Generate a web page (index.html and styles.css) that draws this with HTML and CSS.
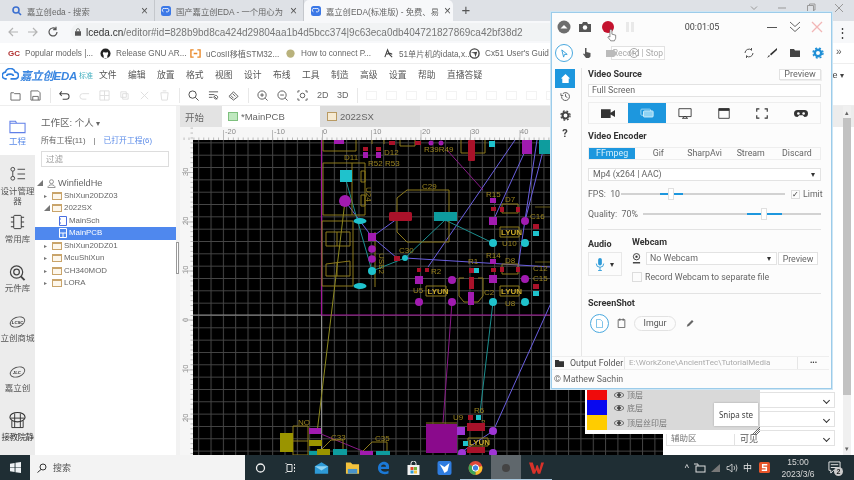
FILE: index.html
```html
<!DOCTYPE html>
<html lang="zh">
<head>
<meta charset="utf-8">
<title>嘉立创EDA</title>
<link rel="stylesheet" href="styles.css">
</head>
<body>
<div class="page">
  <div class="tabstrip">
    <div class="tab t1">
      <svg class="ti" viewBox="0 0 10 10"><circle cx="4" cy="4" r="3" fill="none" stroke="#3b6fd0" stroke-width="1.6"/><path d="M6 6l3 3" stroke="#3b6fd0" stroke-width="1.6"/></svg>
      <span class="tt">嘉立创eda - 搜索</span><span class="tx">×</span>
    </div>
    <div class="tab t2">
      <svg class="ti" viewBox="0 0 12 12"><rect width="12" height="12" rx="3" fill="#3b78e7"/><path d="M3 7a2 2 0 0 1 1-4h3a2 2 0 0 1 1 4H6" stroke="#fff" fill="none"/></svg>
      <span class="tt">国产嘉立创EDA - 一个用心为</span><span class="tx">×</span>
    </div>
    <div class="tab t3">
      <svg class="ti" viewBox="0 0 12 12"><rect width="12" height="12" rx="3" fill="#3b78e7"/><path d="M3 7a2 2 0 0 1 1-4h3a2 2 0 0 1 1 4H6" stroke="#fff" fill="none"/></svg>
      <span class="tt">嘉立创EDA(标准版) - 免费、易</span><span class="tx">×</span>
    </div>
    <span class="plus">+</span>
    <div class="winctl">
      <svg viewBox="0 0 10 10"><path d="M2 3.500l3 3 3-3" fill="none" stroke="#999"/></svg>
      <svg viewBox="0 0 10 10"><path d="M1 5h8" stroke="#999"/></svg>
      <svg viewBox="0 0 10 10"><path d="M1.500 2.500h6v6h-6zM3.500 2.500V1h5.500v6H7.500" fill="none" stroke="#999"/></svg>
      <svg viewBox="0 0 10 10"><path d="M1 1l8 8M9 1l-8 8" stroke="#999"/></svg>
    </div>
  </div>

  <div class="addr">
    <svg class="nav-ic" viewBox="0 0 12 12"><path d="M11 6H2M6 2L2 6l4 4" fill="none" stroke="#b4b4b4" stroke-width="1.2"/></svg>
    <svg class="nav-ic" viewBox="0 0 12 12"><path d="M1 6h9M6 2l4 4-4 4" fill="none" stroke="#b4b4b4" stroke-width="1.2"/></svg>
    <svg class="nav-ic" viewBox="0 0 12 12"><path d="M10 6a4 4 0 1 1-1.2-2.9M9 .8v2.8H6.2" fill="none" stroke="#555" stroke-width="1.2"/></svg>
    <div class="url">
      <svg class="lock" viewBox="0 0 8 10"><rect y="4" width="8" height="6" fill="#555"/><path d="M2 4V2.500a2 2 0 0 1 4 0V4" fill="none" stroke="#555"/></svg>
      <span class="host">lceda.cn</span><span class="path">/editor#id=828b9bd8ca424d29804aa1b4d5bcc374|9c63eca0db404721827869ca42bf38d2</span>
    </div>
    <span class="kebab">⋮</span>
  </div>

  <div class="bookmarks">
    <span class="bm b1"><b class="gc">GC</b>Popular models |...</span>
    <span class="bm b2"><svg class="bi" viewBox="0 0 12 12"><circle cx="6" cy="6" r="5.500" fill="#222"/><path d="M4 11V8.500L3 6l1-2 1.200.8h2L8 4l1 2-1 2.500V11" fill="#fff"/></svg>Release GNU AR...</span>
    <span class="bm b3"><svg class="bi" viewBox="0 0 12 12"><path d="M4 2H1v8h3M8 2h3v8H8M4 6h4" fill="none" stroke="#e9892a" stroke-width="1.500"/></svg>uCosII移植STM32...</span>
    <span class="bm b4"><svg class="bi" viewBox="0 0 12 12"><circle cx="6" cy="6" r="4.500" fill="#b9b27c"/></svg>How to connect P...</span>
    <span class="bm b5"><svg class="bi" viewBox="0 0 12 12"><path d="M2 10l3-8 2 5 3 3M4 7c3-2 5-1 6 0" fill="none" stroke="#444" stroke-width="1.200"/></svg>51单片机的idata,x...</span>
    <span class="bm b6"><svg class="bi" viewBox="0 0 12 12"><circle cx="6" cy="6" r="5" fill="none" stroke="#444" stroke-width="1.500"/><path d="M2 5l4 1 1 4 2-6z" fill="#444"/></svg>Cx51 User's Guid</span>
    <span class="more">»</span>
  </div>

  <div class="menubar">
    <svg class="logo" viewBox="0 0 18 14"><path d="M5 11H4a3.500 3.500 0 0 1-.5-7 5.500 5.500 0 0 1 10.500 0 3.500 3.500 0 0 1 0 7H9M5 8c0-2 2-2 4-2s3 1 3 2" fill="none" stroke="#2f7fe0" stroke-width="1.800"/></svg>
    <span class="brand">嘉立创EDA</span><span class="std">标准</span>
    <span class="menus"><span>文件</span><span>编辑</span><span>放置</span><span>格式</span><span>视图</span><span>设计</span><span>布线</span><span>工具</span><span>制造</span><span>高级</span><span>设置</span><span>帮助</span><span>直播答疑</span></span>
  </div>

  <div class="toolbar">
    <svg class="tb" viewBox="0 0 12 12"><path d="M1 3h3l1 1h6v7H1z" fill="none" stroke="#666"/></svg>
    <svg class="tb" viewBox="0 0 12 12"><path d="M1 1h8l2 2v8H1zM3 11V7h6v4" fill="none" stroke="#666"/></svg>
    <i class="tsep"></i>
    <svg class="tb" viewBox="0 0 12 12"><path d="M1 4h7a3 3 0 0 1 0 6H4M3 1.500L.8 4 3 6.500" fill="none" stroke="#444" stroke-width="1.100"/></svg>
    <svg class="tb" viewBox="0 0 12 12"><path d="M11 4H4a3 3 0 0 0 0 6h4" fill="none" stroke="#ddd"/></svg>
    <svg class="tb" viewBox="0 0 12 12"><path d="M1 1h10v10H1zM1 6h10M6 1v10" fill="none" stroke="#ddd"/></svg>
    <svg class="tb" viewBox="0 0 12 12"><path d="M2 2h6v6H2zM4 4h6v6H4z" fill="none" stroke="#ddd"/></svg>
    <svg class="tb" viewBox="0 0 12 12"><path d="M2 2l8 8M10 2l-8 8" fill="none" stroke="#ddd"/></svg>
    <svg class="tb" viewBox="0 0 12 12"><path d="M2 3h8l-1 8H3zM4 1h4" fill="none" stroke="#ddd"/></svg>
    <i class="tsep"></i>
    <svg class="tb" viewBox="0 0 12 12"><circle cx="5" cy="5" r="4" fill="none" stroke="#444"/><path d="M8 8l3.500 3.500" stroke="#444"/></svg>
    <svg class="tb" viewBox="0 0 12 12"><path d="M1 2h10M1 5h6M1 8h4M7 7l3 3M10 6.500a2 2 0 1 1-.1-.1" fill="none" stroke="#555"/></svg>
    <svg class="tb" viewBox="0 0 12 12"><path d="M1 7l5-5 5 5-5 4zM3 6l3 3M5 4l3 3" fill="none" stroke="#555"/></svg>
    <i class="tsep"></i>
    <svg class="tb" viewBox="0 0 12 12"><circle cx="5.500" cy="5.500" r="4.500" fill="none" stroke="#555"/><path d="M3.500 5.500h4M5.500 3.500v4M9 9l2.500 2.500" stroke="#555"/></svg>
    <svg class="tb" viewBox="0 0 12 12"><circle cx="5.500" cy="5.500" r="4.500" fill="none" stroke="#555"/><path d="M3.500 5.500h4M9 9l2.500 2.500" stroke="#555"/></svg>
    <svg class="tb" viewBox="0 0 12 12"><path d="M1 3V1h2M9 1h2v2M11 9v2H9M3 11H1V9" fill="none" stroke="#555"/><circle cx="6" cy="6" r="2.500" fill="none" stroke="#555"/></svg>
    <span class="tb tb-t">2D</span><span class="tb tb-t">3D</span>
    <i class="tsep"></i>
    <span class="faded-row"><i></i><i></i><i></i><i></i><i></i><i></i><i></i><i></i><i></i><i></i></span>
  </div>

  <div class="work">
    <aside class="rail">
      <div class="rail-item active h49 rail-project">
        <svg class="ri" viewBox="0 0 18 16"><path d="M1 3h6l1 2h9v10H1zM1 5h7" fill="none" stroke="#5f7fe8" stroke-width="1.100"/></svg>
        <span class="blue">工程</span>
      </div>
      <div class="rail-item h51 rail-design">
        <svg class="ri" viewBox="0 0 18 16"><circle cx="4" cy="3" r="2" fill="none" stroke="#444"/><circle cx="4" cy="12.500" r="2" fill="none" stroke="#444"/><path d="M4 5v5.500M9 3h8M9 8h8M9 13h8" stroke="#444"/></svg>
        <span>设计管理器</span>
      </div>
      <div class="rail-item h49 rail-common">
        <svg class="ri" viewBox="0 0 18 16"><rect x="5" y="1" width="8" height="14" rx="1" fill="none" stroke="#333"/><path d="M2 3h3M2 8h3M2 13h3M13 3h3M13 8h3M13 13h3" stroke="#333"/></svg>
        <span>常用库</span>
      </div>
      <div class="rail-item h50 rail-parts">
        <svg class="ri big" viewBox="0 0 18 18"><circle cx="8" cy="8" r="6.500" fill="none" stroke="#444" stroke-width="1.300"/><circle cx="8" cy="8" r="3" fill="none" stroke="#444" stroke-width="1.300"/><path d="M12.500 12.500l4 4" stroke="#444" stroke-width="2"/></svg>
        <span>元件库</span>
      </div>
      <div class="rail-item h50 rail-shop">
        <svg class="ri" viewBox="0 0 18 16"><ellipse cx="9" cy="8" rx="8" ry="5" fill="none" stroke="#555" transform="rotate(-20 9 8)"/><text x="3" y="10.500" class="rail-tx">LCSC</text></svg>
        <span>立创商城</span>
      </div>
      <div class="rail-item h50 rail-shop">
        <svg class="ri" viewBox="0 0 18 16"><ellipse cx="9" cy="8" rx="8" ry="5" fill="none" stroke="#555" transform="rotate(-20 9 8)"/><text x="4" y="10.500" class="rail-tx">JLC</text></svg>
        <span>嘉立创</span>
      </div>
      <div class="rail-item grow rail-learn">
        <svg class="ri big" viewBox="0 0 18 18"><ellipse cx="9" cy="6" rx="8" ry="5" fill="none" stroke="#333" stroke-width="1.200"/><path d="M3 10v7h12v-7M6 2v15M12 2v15M2 7h14" fill="none" stroke="#333"/></svg>
        <span class="tight">接教院静</span>
      </div>
    </aside>

    <section class="tree">
      <div class="ws">工作区: 个人 <span class="car">▾</span></div>
      <div class="scope"><span>所有工程(11)</span><span class="bar">|</span><span class="blue">已打开工程(6)</span></div>
      <div class="filter">过滤</div>
      <ul class="rows">
        <li class="root"><i class="tg">◢</i><svg class="uic" viewBox="0 0 10 10"><circle cx="5" cy="3" r="2.200" fill="none" stroke="#888"/><path d="M1 9.500c0-4 8-4 8 0z" fill="none" stroke="#888"/></svg>WinfieldHe</li>
        <li class="f"><i class="tg">▸</i><i class="fld"></i>ShiXun20DZ03</li>
        <li class="f"><i class="tg">◢</i><i class="fld"></i>2022SX</li>
        <li class="d"><svg class="doc" viewBox="0 0 8 10"><path d="M.5.500h7v9h-7zM0 3h2M0 7h2" fill="none" stroke="#4a6fe0"/></svg>MainSch</li>
        <li class="d sel"><svg class="doc" viewBox="0 0 8 10"><path d="M.5.500h7v9h-7zM.5 5h7M4 5v4" fill="none" stroke="#fff"/></svg>MainPCB</li>
        <li class="f"><i class="tg">▸</i><i class="fld"></i>ShiXun20DZ01</li>
        <li class="f"><i class="tg">▸</i><i class="fld"></i>McuShiXun</li>
        <li class="f"><i class="tg">▸</i><i class="fld"></i>CH340MOD</li>
        <li class="f"><i class="tg">▸</i><i class="fld"></i>LORA</li>
      </ul>
    </section>

    <div class="split"><i></i></div>

    <section class="editor">
      <div class="doc-tabs">
        <span class="dt dt-start">开始</span>
        <span class="dt dt-on"><i class="dico green"></i>*MainPCB</span>
        <span class="dt dt-off"><i class="dico tan"></i>2022SX</span>
      </div>
      <svg class="board" viewBox="180 127 483 328" xmlns="http://www.w3.org/2000/svg">
        <defs>
          <pattern id="grid" x="321.500" y="315" width="12.330" height="12.330" patternUnits="userSpaceOnUse">
            <path d="M.5 0V12.330M0 .5H12.330" stroke="#464646" stroke-width="1" fill="none"/>
          </pattern>
          <pattern id="tickx" x="223" y="127" width="4.930" height="13" patternUnits="userSpaceOnUse">
            <path d="M.5 10.500V13" stroke="#bbb"/>
          </pattern>
          <pattern id="ticky" x="180" y="172" width="13" height="4.930" patternUnits="userSpaceOnUse">
            <path d="M10.500 .5H13" stroke="#bbb"/>
          </pattern>
        </defs>
        <rect x="180" y="127" width="483" height="328" fill="#f6f6f6"/>
        <rect x="180" y="127" width="483" height="13" fill="url(#tickx)"/>
        <rect x="180" y="127" width="13" height="328" fill="url(#ticky)"/>
        <g class="rul">
          <path d="M223.500 130V140M272.500 130V140M322.500 130V140M371.500 130V140M421 130V140M470.500 130V140M520 130V140" stroke="#bbb"/>
          <text x="225" y="134">-20</text><text x="274" y="134">-10</text><text x="323" y="134">0</text><text x="373" y="134">10</text><text x="422" y="134">20</text><text x="471" y="134">30</text><text x="520" y="134">40</text>
          <text transform="translate(188 176) rotate(-90)">30</text><text transform="translate(188 225) rotate(-90)">20</text><text transform="translate(188 274) rotate(-90)">10</text><text transform="translate(188 322) rotate(-90)">0</text><text transform="translate(188 373) rotate(-90)">10</text><text transform="translate(188 422) rotate(-90)">20</text>
          <path d="M182 172.500H193M182 222H193M182 271H193M182 320H193M182 370H193M182 419H193" stroke="#bbb"/>
        </g>
        <rect x="193" y="140" width="470" height="315" fill="#000"/>
        <rect x="193" y="140" width="470" height="315" fill="url(#grid)"/>
        <path d="M193 315H321M321.500 315V455" stroke="#8e8e8e"/>
        <path d="M321.500 140V315H663" stroke="#a3189b" stroke-width="1.200" fill="none"/>

        <g class="rat">
          <path d="M515 140L428 267M537 140L518 267M405 258L551 267M372 237L401 216M372 237L397 258M345 201L372 237M527 147L493 221M544 147L525 221M551 303L495 427M460 453L493 431"/>
        </g>
        <g class="ratg">
          <path d="M345 177L372 271M405 258L445 220M445 220L493 243M372 271L405 258M493 302L480 413"/>
        </g>
        <path d="M345 201L317 433" stroke="#8e8a20" fill="none"/>
        <path d="M452 302L443 423M321 434L365 452M447 150L483 190" stroke="#8a1a8a" fill="none"/>

        <g class="silk">
          <path d="M323 140V151H356V140M323 163H365V215H323ZM352 163V215M361 171h4v11h-4zM361 195h4v11h-4z"/>
          <path d="M322 221H353V286H322ZM326 232H350V246H326ZM337 232V246M326 264L350 261V276H326ZM337 262V276M375 232V287"/>
          <path d="M397 198L407 190H449V242H407L397 232ZM461 140V153H485V140M372 140V144M384 140V144M400 140V146H415V140"/>
          <path d="M500 227H519V237H500ZM500 286H519V296H500ZM426 286H446V296H426ZM502 204H518V213H502ZM502 264H518V274H502ZM459 278H464M478 278H483V296L478 302H464L459 296V278"/>
          <path d="M293 426H308V455H293ZM293 441H308M322 449L331 440H343V449M363 451L372 442H387V451M426 423H457M468 438H488V446H468Z"/>
          <path d="M535 207H551V262H535" stroke-opacity=".7"/>
        </g>
        <g class="lbl">
          <text x="344" y="160">D11</text><text x="368" y="166">R52 R53</text><text x="384" y="155">D12</text><text x="424" y="152">R39R49</text>
          <text x="422" y="189">C29</text><text x="399" y="253">C30</text><text x="431" y="274">R2</text><text x="473" y="264" text-anchor="middle">R1</text>
          <text x="486" y="197">R15</text><text x="505" y="202">D7</text><text x="530" y="219">C16</text><text x="502" y="246">U10</text>
          <text x="486" y="258">R14</text><text x="505" y="263">D8</text><text x="533" y="271">C12</text><text x="533" y="281">C15</text><text x="484" y="295">C2</text><text x="413" y="293">U5</text><text x="505" y="306">U8</text>
          <text x="298" y="425">NO</text><text x="331" y="440">C33</text><text x="375" y="441">C35</text><text x="453" y="420">U9</text><text x="474" y="413">R6</text><text x="481" y="425">2</text>
          <text transform="translate(366 187) rotate(90)">U24</text><text transform="translate(379 253) rotate(90)">USB2</text>
          <text x="427.500" y="294" class="lyun">LYUN</text><text x="501" y="235" class="lyun">LYUN</text><text x="501" y="294" class="lyun">LYUN</text><text x="469" y="445" class="lyun">LYUN</text>
        </g>

        <g class="teal">
          <rect x="340" y="170" width="12" height="12"/><ellipse cx="360" cy="221" rx="6.500" ry="3"/><ellipse cx="360" cy="286" rx="6.500" ry="3"/>
          <circle cx="372" cy="271" r="4"/><circle cx="405" cy="258" r="3"/><circle cx="493" cy="243" r="4"/><circle cx="525" cy="243" r="4"/><circle cx="493" cy="302" r="4"/><circle cx="525" cy="302" r="4"/>
          <rect x="474" y="268" width="5" height="5"/><rect x="489" y="141" width="6" height="6"/><rect x="533" y="231" width="6" height="5"/><rect x="533" y="291" width="6" height="5"/><rect x="539" y="140" width="11" height="14" class="dk"/><rect x="434" y="212" width="23" height="9" class="dk"/>
          <rect x="309" y="451" width="13" height="4" class="dk"/><rect x="333" y="449" width="14" height="6" class="dk"/><rect x="376" y="451" width="14" height="4" class="dk"/><rect x="463" y="441" width="5" height="5"/><rect x="476" y="415" width="5" height="5"/>
        </g>
        <g class="red">
          <rect x="389" y="212" width="23" height="9" rx="1.500"/><rect x="468" y="140" width="7" height="21" rx="1"/><rect x="469" y="277" width="5" height="12"/>
          <rect x="394" y="256" width="6" height="5"/><rect x="417" y="268" width="4" height="4"/><rect x="425" y="268" width="4" height="4"/><rect x="469" y="268" width="5" height="5"/>
          <rect x="491" y="207" width="5" height="4"/><rect x="491" y="268" width="5" height="4"/><rect x="500" y="207" width="4" height="5"/><rect x="516" y="207" width="4" height="5"/><rect x="500" y="267" width="4" height="5"/><rect x="516" y="267" width="4" height="5"/>
          <rect x="533" y="224" width="6" height="5"/><rect x="533" y="284" width="6" height="5"/><rect x="363" y="147" width="5" height="4"/><rect x="376" y="147" width="5" height="4"/><rect x="389" y="141" width="6" height="4"/><rect x="415" y="141" width="6" height="4"/><rect x="468" y="415" width="5" height="5"/><rect x="467" y="423" width="18" height="8"/><rect x="467" y="447" width="18" height="6"/>
        </g>
        <g class="mag">
          <rect x="334" y="140" width="10" height="4"/><circle cx="345" cy="201" r="6"/><rect x="368" y="233" width="8" height="8"/><circle cx="372" cy="249" r="3.800"/><circle cx="372" cy="259" r="3.800"/>
          <rect x="363" y="152" width="5" height="6"/><rect x="376" y="152" width="5" height="6"/><circle cx="431" cy="143" r="2.500"/><circle cx="441" cy="143" r="2.500"/>
          <rect x="415" y="276" width="8" height="8"/><circle cx="452" cy="280" r="4"/><circle cx="419" cy="302" r="4"/><circle cx="452" cy="302" r="4"/><rect x="468" y="292" width="6" height="13"/>
          <rect x="490" y="198" width="6" height="5"/><rect x="489" y="217" width="8" height="8"/><circle cx="525" cy="221" r="4"/><rect x="490" y="259" width="6" height="5"/><rect x="489" y="275" width="8" height="8"/><circle cx="525" cy="279" r="4"/>
          <rect x="522" y="140" width="10" height="14"/>
          <rect x="309" y="428" width="12" height="6"/><rect x="360" y="451" width="13" height="4"/><rect x="426" y="424" width="31" height="29" class="big"/><rect x="457" y="427" width="8" height="8" class="lt"/><circle cx="493" cy="431" r="4" class="lt"/><circle cx="493" cy="453" r="4" class="lt"/><circle cx="462" cy="453" r="4" class="lt"/>
        </g>
        <g class="oli">
          <rect x="280" y="433" width="13" height="19"/><rect x="309" y="440" width="13" height="6"/><rect x="317" y="449" width="13" height="6"/>
        </g>
      </svg>
    </section>

    <aside class="props">
      <div class="props-top"><span class="prof">He <span class="car">▾</span></span></div>
      <div class="props-body">
        <div class="pgrid">
          <div class="prow"><span class="chev"></span></div>
          <div class="prow"><span class="chev"></span></div>
          <div class="prow"><span class="k">辅助区</span><span class="v">可见</span><span class="chev"></span></div>
        </div>
      </div>
      <div class="scroll"><b></b><i class="up">▴</i><i class="down">▾</i></div>
    </aside>
  </div>

  <div class="taskbar">
    <svg class="start" viewBox="0 0 12 12"><path d="M0 1.800L5 1v4.600H0zM6 .9l6-.9v5.600H6zM0 6.400h5V11l-5-.8zM6 6.400h6V12l-6-.9z" fill="#eef2f4"/></svg>
    <div class="search">
      <svg class="sic" viewBox="0 0 10 10"><circle cx="6" cy="4" r="3" fill="none" stroke="#333"/><path d="M4 6.500L.5 9.500" stroke="#333"/></svg>
      <span>搜索</span>
    </div>
    <div class="apps">
      <span class="app"><svg viewBox="0 0 14 14"><circle cx="7" cy="7" r="4" fill="none" stroke="#f0f0f0" stroke-width="1.300"/></svg></span>
      <span class="app"><svg viewBox="0 0 14 14"><path d="M2.500 3.500h5v7h-5zM10 3v1.500M10 6v2M10 9.500V11M1.500 2v1M1.500 11v1" fill="none" stroke="#e8e8e8"/></svg></span>
      <span class="app"><svg viewBox="0 0 18 14"><path d="M1 5l8-5 8 5v9H1z" fill="#2e9ad6"/><path d="M1 5l8 5 8-5" fill="#8fd3f2"/></svg></span>
      <span class="app"><svg viewBox="0 0 16 14"><path d="M1 1h5l2 2h7v10H1z" fill="#f3c23d"/><path d="M3 8h10v5H3z" fill="#4a93c8"/></svg></span>
      <span class="app"><svg viewBox="0 0 14 14"><path d="M12.500 8H4.500c.3 2.800 4.500 3.400 7.500 1.800v2.600C8 14.200 1.500 13 1.500 7 1.500 1.500 8-1.300 11.500 2.500c1.300 1.500 1.100 3.500 1 5.500zM4.500 5.800h5c0-3-4.700-3-5 0z" fill="#1b79d6"/></svg></span>
      <span class="app"><svg viewBox="0 0 14 14"><path d="M1 4h12v10H1z" fill="#f2f2f2"/><path d="M4.500 4V2.500a2.500 2.500 0 0 1 5 0V4" fill="none" stroke="#f2f2f2"/><rect x="4" y="6" width="3" height="3" fill="#e24b2b"/><rect x="7.500" y="6" width="3" height="3" fill="#72b33c"/><rect x="4" y="9.500" width="3" height="3" fill="#2e9ad6"/><rect x="7.500" y="9.500" width="3" height="3" fill="#f3c23d"/></svg></span>
      <span class="app"><svg viewBox="0 0 14 14"><rect width="14" height="14" rx="2" fill="#2f7de0"/><path d="M2 3l5 3 5-4-2 8-3 2-2-4z" fill="#fff"/></svg></span>
      <span class="app on"><svg viewBox="0 0 14 14"><circle cx="7" cy="7" r="7" fill="#e0483a"/><path d="M7 7L13.500 5A7 7 0 0 1 7 14z" fill="#f5c42c"/><path d="M7 7L7 14A7 7 0 0 1 1 3.500z" fill="#3da655"/><circle cx="7" cy="7" r="3.200" fill="#3f7fe0" stroke="#fff"/></svg></span>
      <span class="app tile on"><i></i></span>
      <span class="app on"><svg viewBox="0 0 16 14"><path d="M0 1h4l2.500 8L8 4h1.500l1.500 5L13 1h3l-4 12H9.500L8 9l-1.500 4H4z" fill="#d8322a"/></svg></span>
    </div>
    <div class="tray">
      <span class="ty">^</span>
      <svg class="tyi" viewBox="0 0 12 10"><rect x="2" y="3" width="9" height="6" fill="none" stroke="#ddd"/><path d="M0 1h4v2" fill="none" stroke="#ddd"/></svg>
      <svg class="tyi" viewBox="0 0 12 10"><path d="M1 9l9-8v8z" fill="#777"/></svg>
      <svg class="tyi" viewBox="0 0 12 10"><path d="M1 3.500h2l3-2.500v8L3 6.500H1zM8 3l.8 2L8 7M10 1.500l1 3.500-1 3.500" fill="none" stroke="#ddd" stroke-width=".8"/></svg>
      <span class="zh">中</span>
      <svg class="sogou" viewBox="0 0 12 12"><rect width="12" height="12" rx="2" fill="#e8552a"/><path d="M9 3H4v3h4v3H3" fill="none" stroke="#fff" stroke-width="1.600"/></svg>
      <div class="clock"><span>15:00</span><span>2023/3/6</span></div>
      <div class="note"><svg viewBox="0 0 14 14"><path d="M1 1h12v9H6l-3 3v-3H1z" fill="none" stroke="#eee"/><path d="M3 4h8M3 7h8" stroke="#eee"/></svg><b>2</b></div>
    </div>
  </div>

  <div class="layers">
    <div class="lrow"><i class="sw r"></i><span class="eye"></span><span>顶层</span></div>
    <div class="lrow"><i class="sw b"></i><span class="eye"></span><span>底层</span></div>
    <div class="lrow"><i class="sw y"></i><span class="eye"></span><span>顶层丝印层</span></div>
  </div>
  <div class="snip">Snipa ste</div>
  <svg class="resize" viewBox="0 0 10 10"><path d="M1 9l8-8M3 9l6-6M5 9l4-4" stroke="#666"/></svg>

  <div class="rec">
    <div class="rec-top">
      <span class="ric-c"><svg class="r14" viewBox="0 0 14 14"><circle cx="7" cy="7" r="6.500" fill="#6e6e6e"/><path d="M3.500 8.500L7 5l3.500 3.500z" fill="#fff"/></svg></span>
      <svg class="r14 cam" viewBox="0 0 14 14"><path d="M1 4h3l1-2h4l1 2h3v8H1z" fill="#555"/><circle cx="7" cy="7.500" r="2.200" fill="#fff"/></svg>
      <svg class="r14 recb" viewBox="0 0 14 14"><circle cx="7" cy="7" r="6" fill="#c4122e"/></svg>
      <svg class="r14 pause" viewBox="0 0 14 14"><path d="M3 2h3v10H3zM8 2h3v10H8z" fill="#e9e9e9"/></svg>
      <span class="time">00:01:05</span>
      <span class="minbtn"></span>
      <svg class="r14 dbl" viewBox="0 0 14 14"><path d="M2 2l5 4.500L12 2M2 7l5 4.500L12 7" fill="none" stroke="#666"/></svg>
      <svg class="r14 cls" viewBox="0 0 14 14"><path d="M2 2l10 10M12 2L2 12" stroke="#f2b6b6" stroke-width="1.300"/></svg>
    </div>
    <div class="rec-tools">
      <span class="ring"><svg viewBox="0 0 10 10"><path d="M2 1l6 5H5l-1 3z" fill="none" stroke="#2d9ad8"/></svg></span>
      <svg class="r12 hand" viewBox="0 0 12 12"><path d="M4 1h1.500v4l4 1v3.500L8 11H5L2 7l1-.5 1 1z" fill="#555"/></svg>
      <span class="hint">Record | Stop</span>
      <span class="rt-right">
        <svg class="r12" viewBox="0 0 12 12"><path d="M10 6a4 4 0 0 1-6.500 3M2 6a4 4 0 0 1 6.500-3M8.500 1v2.500M3.500 11V8.500" fill="none" stroke="#555"/></svg>
        <svg class="r12" viewBox="0 0 12 12"><path d="M1 11l2-3 1 1zM4 7l7-6v2L5 8.500z" fill="#333"/></svg>
        <svg class="r12" viewBox="0 0 12 12"><path d="M1 2h4l1 1.500h5V10H1z" fill="#444"/></svg>
        <svg class="r12" viewBox="0 0 12 12"><circle cx="6" cy="6" r="3.200" fill="none" stroke="#1f8fd6" stroke-width="2.400"/><circle cx="6" cy="6" r="5" fill="none" stroke="#1f8fd6" stroke-width="1.400" stroke-dasharray="2 2"/></svg>
      </span>
      <svg class="ghost g1" viewBox="0 0 12 12"><path d="M1 3h8l2 2v3l-2 2H1z" fill="#bbb"/></svg>
      <svg class="ghost g2" viewBox="0 0 12 12"><circle cx="6" cy="6" r="4.500" fill="none" stroke="#aaa"/><path d="M5 3v3.500h3" fill="none" stroke="#aaa"/></svg>
    </div>
    <svg class="pointer" viewBox="0 0 12 16"><path d="M3.500 9V2.500a1.200 1.200 0 0 1 2.400 0V7l4.500 1.200V12l-1.500 3H4.500L1 10.500c1-1.200 1.800-.8 2.500 0z" fill="#fff" stroke="#555" stroke-width=".8"/></svg>
    <div class="rec-body">
      <nav class="rnav">
        <span class="rn on"><svg viewBox="0 0 12 12"><path d="M1 6l5-5 5 5h-1.500v5h-7V6z" fill="#fff"/></svg></span>
        <span class="rn"><svg viewBox="0 0 12 12"><path d="M3 3a4.300 4.300 0 1 1-1.300 3M1 2.500V5h2.500M6 3.500V6l2 1" fill="none" stroke="#555"/></svg></span>
        <span class="rn"><svg viewBox="0 0 12 12"><circle cx="6" cy="6" r="3.200" fill="none" stroke="#444" stroke-width="2.200"/><circle cx="6" cy="6" r="5" fill="none" stroke="#444" stroke-width="1.400" stroke-dasharray="2 2"/></svg></span>
        <span class="rn q">?</span>
      </nav>
      <div class="rmain">
        <div class="rhead"><b>Video Source</b><span class="btn pv">Preview</span></div>
        <div class="field">Full Screen</div>
        <div class="src">
          <span><svg viewBox="0 0 16 12"><path d="M0 1h11v10H0zM11 5l5-3v8l-5-3z" fill="#333"/></svg></span>
          <span class="on"><svg viewBox="0 0 16 12"><rect x="1" y="1" width="11" height="7" rx="1" fill="none" stroke="#a9def7"/><rect x="4" y="3" width="11" height="7" rx="1" fill="#8ed2f3" stroke="#d7f1fc"/></svg></span>
          <span><svg viewBox="0 0 16 12"><path d="M1 .5h14v9H1zM5 11.500h6L8 9z" fill="none" stroke="#333"/></svg></span>
          <span><svg viewBox="0 0 16 12"><path d="M2 .5h12v11H2z" fill="none" stroke="#333"/><path d="M2 0h12v3H2z" fill="#333"/></svg></span>
          <span><svg viewBox="0 0 16 12"><path d="M5 .7H2V4M11 .7h3V4M14 8v3.300h-3M5 11.300H2V8" fill="none" stroke="#333" stroke-width="1.300"/></svg></span>
          <span><svg viewBox="0 0 16 12"><path d="M4 2h8a3.500 3.500 0 0 1 0 8l-2-2H6l-2 2a3.500 3.500 0 0 1 0-8z" fill="#333"/><circle cx="5" cy="6" r="1.500" fill="#fff"/><circle cx="11" cy="6" r="1.500" fill="#fff"/></svg></span>
        </div>
        <div class="rhead enc-h"><b>Video Encoder</b></div>
        <div class="enc"><span class="on">FFmpeg</span><span>Gif</span><span>SharpAvi</span><span>Stream</span><span>Discard</span></div>
        <div class="field combo">Mp4 (x264 | AAC)<i>▾</i></div>
        <div class="sl fps">
          <span class="sl-l">FPS:&nbsp; 10</span>
          <div class="track"><i class="fill"></i><i class="thumb"></i></div>
          <span class="lim"><i class="ck">✓</i>Limit</span>
        </div>
        <div class="sl qual">
          <span class="sl-l">Quality:&nbsp; 70%</span>
          <div class="track"><i class="fill"></i><i class="thumb"></i></div>
        </div>
        <hr class="rule first">
        <div class="av">
          <div class="aud">
            <b>Audio</b>
            <div class="audbox"><svg viewBox="0 0 10 14"><rect x="3" y="0" width="4" height="8" rx="2" fill="#2d9ad8"/><path d="M1 6a4 4 0 0 0 8 0M5 10v3M3 13.500h4" fill="none" stroke="#2d9ad8"/></svg><i>▾</i></div>
          </div>
          <div class="web">
            <b>Webcam</b>
            <div class="wrow"><svg viewBox="0 0 10 12"><circle cx="5" cy="4" r="3.500" fill="none" stroke="#333"/><circle cx="5" cy="4" r="1.300" fill="#333"/><path d="M1 10h8v1.500H1z" fill="#333"/></svg><span class="field wc">No Webcam<i>▾</i></span><span class="btn wp">Preview</span></div>
            <div class="wchk"><i class="cb"></i>Record Webcam to separate file</div>
          </div>
        </div>
        <hr class="rule second">
        <b class="ss">ScreenShot</b>
        <div class="shots">
          <span class="ring big"><svg viewBox="0 0 10 12"><path d="M1 .5h5l3 3v8H1z" fill="none" stroke="#55b0e2"/></svg></span>
          <svg class="clip" viewBox="0 0 10 12"><path d="M1 2h8v9.500H1zM3 .5v3M7 .5v3" fill="none" stroke="#555"/></svg>
          <span class="pill">Imgur</span>
          <svg class="clip" viewBox="0 0 12 12"><path d="M1 11l1-3 6-6 2 2-6 6z" fill="#666"/></svg>
        </div>
      </div>
    </div>
    <div class="rout">
      <svg viewBox="0 0 12 10"><path d="M1 1h4l1 1.500h5V9H1z" fill="#333"/></svg>
      <span class="ol">Output Folder</span>
      <span class="op">E:\WorkZone\AncientTec\TutorialMedia</span>
      <span class="dots">•••</span>
    </div>
    <div class="rcopy">© Mathew Sachin</div>
  </div>
</div>
</body>
</html>
```
FILE: styles.css
```css
* { box-sizing: border-box; }
html, body { margin: 0; padding: 0; }
body { width: 854px; height: 480px; overflow: hidden; background: #fff; font-family: "Liberation Sans", "Noto Sans CJK SC", sans-serif; color: #555; }
i { font-style: normal; }
ul { list-style: none; margin: 0; padding: 0; }
svg { display: block; flex: none; }
.page { position: relative; width: 854px; height: 480px; display: flex; flex-direction: column; overflow: hidden; filter: blur(.35px); }

/* browser tabs */
.tabstrip { height: 21px; flex: none; display: flex; align-items: stretch; background: #dee1e6; font-size: 8.300px; color: #666; }
.tab { width: 149px; display: flex; align-items: center; padding: 0 6px 0 6px; gap: 5px; border-right: 1px solid #c4c7cc; }
.t1 { width: 155px; padding-left: 12px; }
.t3 { background: #f7f8fa; border: 0; border-radius: 5px 5px 0 0; padding-left: 7px; }
.ti { width: 10px; height: 10px; }
.tt { flex: 1; white-space: nowrap; }
.tx { font-size: 12px; color: #555; }
.plus { width: 26px; text-align: center; font-size: 15px; line-height: 20px; color: #555; }
.winctl { margin-left: auto; display: flex; gap: 18.500px; padding: 3px 10px 0 0; }
.winctl svg { width: 10px; height: 10px; }

/* address */
.addr { height: 22px; flex: none; display: flex; align-items: center; background: #f7f8fa; padding-left: 7px; gap: 8px; }
.nav-ic { width: 12px; height: 12px; }
.url { flex: 1; height: 18px; margin-left: 4px; background: #f1f3f4; border-radius: 9px; display: flex; align-items: center; padding-left: 4px; font-size: 10px; color: #777; white-space: nowrap; }
.lock { width: 6px; height: 8px; margin-right: 5px; }
.host { color: #333; }
.kebab { width: 24px; font-size: 13px; color: #444; text-align: center; }

/* bookmarks */
.bookmarks { height: 21px; flex: none; display: flex; align-items: center; background: #fff; border-bottom: 1px solid #eee; font-size: 8.200px; color: #666; padding-left: 8px; white-space: nowrap; }
.bm { display: flex; align-items: center; gap: 5px; }
.b1 { width: 92px; } .b2 { width: 90px; } .b3 { width: 95px; } .b4 { width: 98px; } .b5 { width: 86px; }
.gc { color: #b03030; font-size: 8px; }
.bi { width: 11px; height: 11px; }
.more { position: absolute; left: 836px; top: 46px; font-size: 10px; color: #555; }

/* app menu */
.menubar { height: 21px; flex: none; display: flex; align-items: center; background: #fff; padding-left: 2px; }
.logo { width: 17px; height: 14px; }
.brand { margin-left: 1px; font-size: 11.500px; font-style: italic; font-weight: 700; color: #3a86e0; white-space: nowrap; width: 59px; letter-spacing: -.3px; }
.std { font-size: 7px; color: #45b0c0; width: 20px; }
.menus { display: flex; gap: 11px; font-size: 8.800px; color: #555; white-space: nowrap; }
.menus span { min-width: 18px; }

.toolbar { height: 21px; flex: none; display: flex; align-items: center; background: #fff; border-bottom: 1px solid #eee; padding-left: 10px; gap: 9px; }
.tb { width: 11px; height: 11px; }
.tb-t { font-size: 9px; line-height: 11px; color: #666; width: 11px; }
.tsep { width: 1px; height: 15px; background: #e8e8e8; margin: 0 -.5px; }
.faded-row { display: flex; gap: 9px; }
.faded-row i { width: 11px; height: 9px; border: 1px solid #f3f3f3; }

/* workspace */
.work { flex: 1; min-height: 0; display: flex; background: #fff; }
.rail { width: 35px; flex: none; display: flex; flex-direction: column; background: #ececec; font-size: 8.500px; color: #555; text-align: center; }
.rail-item { display: flex; flex-direction: column; align-items: center; padding-top: 10px; gap: 3px; line-height: 9.500px; }
.rail-project { padding-top: 12px; }
.rail-design { padding-top: 11px; gap: 5px; }
.rail-common { padding-top: 8px; gap: 5px; }
.rail-parts { padding-top: 9px; gap: 2px; }
.rail-shop { padding-top: 9px; gap: 4px; }
.rail-learn { padding-top: 6px; gap: 4px; }
.rail-item.active { background: #fff; color: #5f7fe8; }
.h49 { height: 49px; } .h50 { height: 50px; } .h51 { height: 51px; }
.grow { flex: 1; }
.ri { width: 17px; height: 16px; }
.ri.big { height: 18px; }
.rail-tx { font: italic 700 4.500px "Liberation Sans", sans-serif; fill: #333; }
.tight { letter-spacing: -.5px; white-space: nowrap; color: #333; }
.blue { color: #5b8be8; }

.tree { width: 141px; flex: none; background: #fff; padding-top: 11px; font-size: 7.900px; color: #666; }
.ws { padding-left: 6px; font-size: 9.500px; line-height: 12px; white-space: nowrap; }
.car { font-size: 8px; }
.scope { display: flex; padding: 5px 0 0 6px; font-size: 7.800px; line-height: 11px; }
.bar { margin: 0 8px; }
.filter { margin: 5px 7px 0 6px; height: 16px; border: 1px solid #ddd; line-height: 14px; padding-left: 4px; font-size: 8.500px; color: #999; }
.rows { margin-top: 10px; }
.rows li { height: 12.500px; line-height: 12.500px; display: flex; align-items: center; white-space: nowrap; }
.root { padding-left: 2px; font-size: 9.200px; }
.f { padding-left: 9px; }
.d { padding-left: 24px; }
.tg { font-size: 6px; width: 8px; color: #777; }
.uic { width: 9px; height: 9px; margin: 0 2px 0 2px; }
.fld { width: 10px; height: 8px; border: 1px solid #c9a46a; border-top-width: 2px; margin-right: 2px; background: #fdf7ec; }
.doc { width: 8px; height: 10px; margin-right: 2px; }
.sel { background: #4f88ee; color: #fff; }

.split { width: 4px; flex: none; background: #f2f2f2; display: flex; align-items: center; padding-bottom: 46px; }
.split i { width: 3px; height: 32px; background: #fff; border: 1px solid #999; }

.editor { width: 483px; flex: none; display: flex; flex-direction: column; }
.doc-tabs { height: 21px; flex: none; display: flex; background: #e3e3e3; font-size: 9.500px; color: #666; align-items: stretch; }
.dt { display: flex; align-items: center; gap: 3px; }
.dt-start { width: 42px; padding-left: 5px; background: #e3e3e3; }
.dt-on { width: 98px; background: #fff; padding-left: 6px; }
.dt-off { width: 100px; background: #dcdcdc; padding-left: 7px; }
.dico { width: 10px; height: 9px; border: 1px solid; }
.green { background: #bfe8bf; border-color: #7ec07e; }
.tan { background: #f6ead2; border-color: #b99a62; }
.board { width: 483px; height: 328px; flex: none; }
.rul text { font: 7.500px "Liberation Sans", sans-serif; fill: #8a8a8a; }
.rat path { stroke: #6a5fe0; fill: none; stroke-width: 1; }
.ratg path { stroke: #1c8f8f; fill: none; stroke-width: 1; }
.silk path { stroke: #8d7a1c; fill: none; stroke-width: 1; }
.lbl text { font: 8px "Liberation Sans", sans-serif; fill: #9a8420; }
.lbl .lyun { font-size: 8px; font-weight: 700; fill: #c9a92a; }
.teal rect, .teal circle, .teal ellipse { fill: #1fc2cc; }
.teal .dk { fill: #0e9c9e; }
.red rect { fill: #a9122a; }
.mag rect, .mag circle { fill: #a11bb0; }
.mag .big { fill: #8a0a8c; }
.mag .lt { fill: #9f35d6; }
.oli rect { fill: #9a9400; }

.props { flex: 1; min-width: 0; display: flex; flex-direction: column; background: #fff; position: relative; }
.props-top { height: 21px; flex: none; background: #ececec; }
.prof { position: absolute; right: 10px; top: -36px; font-size: 9px; color: #444; }
.props-body { flex: 1; background: #fff; display: flex; flex-direction: column; justify-content: flex-end; padding: 0 19px 9px 3px; }
.scroll { position: absolute; right: 3px; top: 0; bottom: 0; width: 8px; background: #f0f0f0; }
.scroll b { display: block; margin-top: 12px; height: 277px; background: #c2c2c2; }
.scroll .up, .scroll .down { position: absolute; left: 0; width: 8px; font-size: 7px; line-height: 8px; text-align: center; color: #666; }
.scroll .up { top: 3px; } .scroll .down { bottom: 2px; }
.pgrid { display: flex; flex-direction: column; gap: 3px; }
.prow { height: 16px; border: 1px solid #e2e2e2; background: #fff; display: flex; align-items: center; font-size: 8.500px; }
.prow .k { width: 68px; padding-left: 4px; color: #777; border-right: 1px solid #e2e2e2; line-height: 14px; }
.prow .v { padding-left: 5px; color: #555; font-size: 9px; }
.chev { margin-left: auto; margin-right: 5px; width: 5px; height: 5px; border: solid #333; border-width: 0 1.300px 1.300px 0; transform: rotate(45deg); }

/* taskbar */
.taskbar { height: 25px; flex: none; display: flex; align-items: center; background: #1f2e34; padding-right: 4px; }
.start { width: 11px; height: 11px; margin: 0 9px 0 10px; }
.search { width: 215px; height: 25px; background: #f3f3f3; display: flex; align-items: center; padding-left: 7px; gap: 6px; font-size: 9px; color: #555; }
.sic { width: 10px; height: 10px; }
.apps { display: flex; align-items: stretch; height: 25px; }
.app { width: 30.700px; display: flex; align-items: center; justify-content: center; }
.app svg { width: 15px; height: 14px; }
.app.on { box-shadow: inset 0 -1px 0 #a9c7dc; }
.tile { background: #5f676c; }
.tile i { width: 8px; height: 8px; border-radius: 50%; background: #444; }
.tray { margin-left: auto; display: flex; align-items: center; height: 25px; color: #e6e6e6; font-size: 9px; }
.ty { width: 14px; text-align: center; }
.tyi { width: 12px; height: 10px; margin-right: 4px; }
.zh { margin: 0 7px 0 1px; }
.sogou { width: 11px; height: 11px; }
.clock { width: 52px; margin: 0 2px 0 2px; display: flex; flex-direction: column; align-items: center; line-height: 12px; font-size: 8.500px; color: #d8d8d8; }
.note { position: relative; width: 24px; }
.note svg { width: 13px; height: 13px; margin-left: 2px; }
.note b { position: absolute; left: 8px; top: 6px; width: 9px; height: 9px; border-radius: 50%; background: #ccc; color: #222; font-size: 7px; line-height: 9px; text-align: center; }

/* floating layer panel */
.layers { position: absolute; left: 585px; top: 389px; width: 175px; padding: 0 0 4px 2px; background: #fff; display: flex; flex-direction: column; }
.lrow { display: flex; align-items: center; background: #d9d9d9; font-size: 8px; color: #777; gap: 3px; }
.lrow:nth-child(1) { height: 11px; }
.lrow:nth-child(2) { height: 15px; }
.lrow:nth-child(3) { height: 15px; }
.sw { width: 20px; height: 100%; margin-right: 4px; }
.sw.r { background: #f00b0b; } .sw.b { background: #0808f0; } .sw.y { background: #ffcc00; }
.eye { width: 10px; height: 6px; border: 1px solid #666; border-radius: 50%; background: radial-gradient(circle, #444 0 1.500px, transparent 2px); }
.snip { position: absolute; left: 714px; top: 403px; width: 44px; height: 23px; background: #fff; box-shadow: 0 0 2px rgba(0,0,0,.25); font: 8px/23px "Noto Sans", sans-serif; text-align: center; color: #444; }
.resize { position: absolute; left: 751px; top: 426px; width: 10px; height: 10px; }

/* recorder window */
.rec { position: absolute; left: 551px; top: 12px; width: 281px; height: 377px; background: #fcfcfc; border: 1px solid #9cccea; display: flex; flex-direction: column; font-family: Roboto, "Liberation Sans", sans-serif; font-size: 8.800px; color: #555; box-shadow: 0 0 0 1px #cfe6f4; }
.rec b { color: #333; font-weight: 700; }
.rec-top { height: 28px; flex: none; display: flex; align-items: center; padding-left: 5px; }
.r14 { width: 14px; height: 14px; }
.ric-c { display: flex; }
.cam { margin-left: 7px; }
.recb { margin-left: 9px; }
.pause { margin-left: 8px; }
.time { width: 62px; margin-left: 34px; text-align: center; font-size: 9px; color: #444; }
.minbtn { width: 10px; height: 1px; background: #555; margin-left: 34px; }
.dbl { margin-left: 11px; }
.cls { margin-left: 8px; }
.rec-tools { height: 24px; flex: none; display: flex; align-items: center; padding: 0 7px 0 3px; position: relative; }
.ring { width: 18px; height: 18px; border: 1px solid #4aa9df; border-radius: 50%; display: flex; align-items: center; justify-content: center; background: #fff; }
.ring svg { width: 9px; height: 9px; }
.r12 { width: 12px; height: 12px; }
.hand { margin-left: 8px; }
.hint { margin-left: 18px; width: 54px; height: 14px; border: 1px solid #e2e2e2; background: #fff; color: #aaa; font-size: 8.500px; line-height: 12px; text-align: center; white-space: nowrap; }
.rt-right { margin-left: auto; display: flex; gap: 11px; }
.ghost { position: absolute; top: 6px; width: 12px; height: 12px; }
.g1 { left: 53px; }
.g2 { left: 76px; }
.pointer { position: absolute; left: 55px; top: 15px; width: 10px; height: 14px; }
.rec-body { flex: 1; min-height: 0; display: flex; padding-top: 3px; }
.rnav { width: 29px; flex: none; padding: 1px 0 0 3px; display: flex; flex-direction: column; }
.rn { width: 20px; height: 18.500px; display: flex; align-items: center; justify-content: center; }
.rn svg { width: 11px; height: 11px; }
.rn.on { background: #1d97de; }
.rn.q { font-size: 11px; font-weight: 700; color: #444; }
.rmain { flex: 1; min-width: 0; border-left: 1px solid #e6e6e6; padding: 0 10px 0 6px; }
.rhead { height: 12px; display: flex; align-items: center; justify-content: space-between; font-size: 9px; }
.btn { border: 1px solid #e2e2e2; background: #fff; color: #666; display: flex; align-items: center; justify-content: center; }
.pv { width: 42px; height: 11px; box-shadow: 1px 1px 0 #eee; }
.field { height: 13px; border: 1px solid #e3e3e3; background: #fff; line-height: 11px; padding-left: 3px; color: #666; position: relative; display: block; }
.rmain > .field { margin-top: 4px; }
.rmain > .combo { margin-top: 8px; padding-left: 4px; }
.field i { position: absolute; right: 5px; top: 0; font-size: 8px; color: #333; }
.src { display: flex; margin-top: 5px; height: 22px; border: 1px solid #eee; }
.src span { flex: 1; display: flex; align-items: center; justify-content: center; }
.src svg { width: 14px; height: 11px; }
.src .on { background: #1d97de; }
.enc-h { margin-top: 6px; }
.enc { display: flex; margin-top: 5px; height: 13px; border: 1px solid #eee; line-height: 11px; }
.enc span { flex: 1; text-align: center; color: #666; }
.enc .on { background: #1d97de; color: #d8f0fc; }
.sl { display: flex; align-items: center; height: 12px; margin-top: 7px; }
.sl-l { white-space: nowrap; color: #666; }
.fps .sl-l { width: 33px; }
.qual .sl-l { width: 55px; }
.qual { margin-top: 8px; }
.track { flex: 1; height: 2px; background: #d2d2d2; position: relative; }
.fill { position: absolute; top: 0; height: 2px; background: #1d97de; }
.thumb { position: absolute; top: -5px; width: 6px; height: 12px; background: #fff; border: 1px solid #e0e0e0; }
.fps .fill { left: 39px; width: 23px; }
.fps .thumb { left: 47px; }
.qual .fill { left: 104px; width: 35px; }
.qual .thumb { left: 118px; }
.lim { width: 30px; margin-left: 6px; display: flex; align-items: center; gap: 3px; color: #666; }
.ck { width: 9px; height: 9px; border: 1px solid #ddd; font-size: 8px; line-height: 8px; color: #333; text-align: center; }
.rule { border: 0; border-top: 1px solid #e3e3e3; margin: 9px 0 0; }
.av { display: flex; margin-top: 7px; }
.aud { width: 44px; padding-top: 2px; font-size: 9px; }
.audbox { margin-top: 3px; width: 34px; height: 24px; border: 1px solid #e8e8e8; display: flex; align-items: center; padding-left: 6px; gap: 5px; }
.audbox svg { width: 10px; height: 13px; }
.audbox i { font-size: 8px; color: #333; }
.web { flex: 1; font-size: 9px; }
.wrow { display: flex; align-items: center; margin-top: 5px; font-size: 8.800px; }
.wrow svg { width: 9px; height: 11px; margin-right: 5px; }
.wc { width: 131px; }
.wp { width: 40px; height: 13px; margin-left: 1px; }
.wchk { display: flex; align-items: center; gap: 3px; margin-top: 7px; color: #666; font-size: 8.800px; white-space: nowrap; }
.cb { width: 10px; height: 10px; border: 1px solid #ddd; }
.rule.second { margin-top: 11px; }
.ss { display: block; margin-top: 3px; font-size: 9px; line-height: 12px; }
.shots { display: flex; align-items: center; margin-top: 5px; gap: 8px; height: 18px; padding-left: 2px; }
.ring.big { width: 19px; height: 19px; }
.clip { width: 9px; height: 10px; }
.pill { width: 42px; height: 15px; border: 1px solid #e2e2e2; border-radius: 8px; text-align: center; line-height: 13px; margin-right: 2px; }
.rout { height: 14px; flex: none; display: flex; align-items: center; padding-left: 2px; margin-right: 2px; border-top: 1px solid #eee; border-bottom: 1px solid #eee; }
.rout svg { width: 11px; height: 9px; margin-right: 5px; }
.ol { width: 54px; white-space: nowrap; color: #555; }
.op { flex: 1; height: 12px; line-height: 12px; padding-left: 4px; border: solid #e6e6e6; border-width: 0 1px; color: #aaa; white-space: nowrap; font-size: 8px; }
.dots { width: 31px; text-align: center; color: #333; font-size: 7px; }
.rcopy { height: 18px; flex: none; line-height: 18px; padding-left: 2px; color: #666; }
```
